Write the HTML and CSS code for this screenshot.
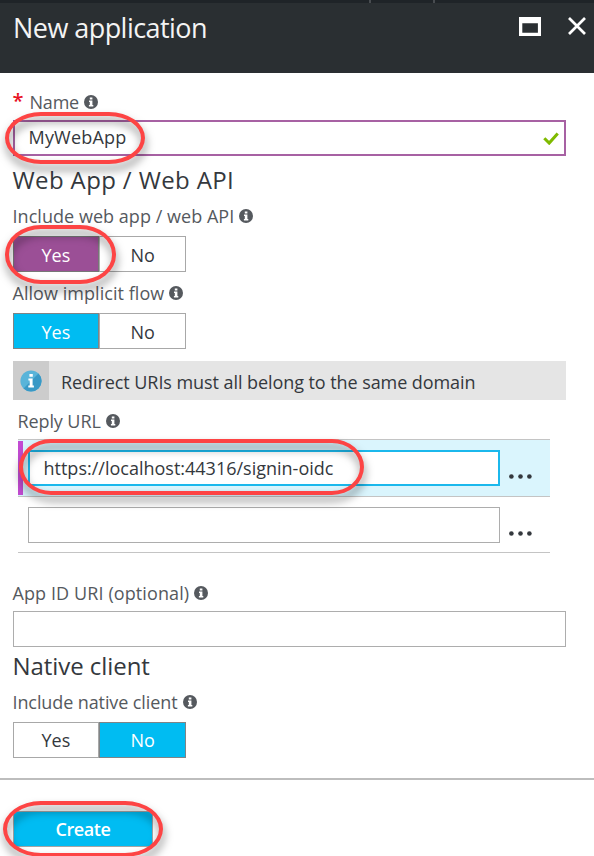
FILE: index.html
```html
<!DOCTYPE html>
<html lang="en">
<head>
<meta charset="utf-8">
<title>New application</title>
<link rel="stylesheet" href="styles.css">
</head>
<body>
<svg width="0" height="0" class="defs">
  <symbol id="info" viewBox="0 0 14 14">
    <circle cx="7" cy="7" r="7" fill="#55595e"/>
    <path d="M5.8 2.5h2.6v2.1H5.8zM5 5.6h3.4v4.4h.9v1.4H4.9V10h.9V7H5z" fill="#fff"/>
  </symbol>
</svg>
<main class="blade">
  <div class="topbar"><i></i><i></i></div>
  <header class="blade-header">
    <h1 class="title">New application</h1>
    <div class="window-actions">
      <svg class="icon-max" viewBox="0 0 22 19"><path fill-rule="evenodd" fill="#fff" d="M0 0h22v19H0zM3.3 6.3v9.4h15.6V6.3z"/></svg>
      <svg class="icon-close" viewBox="0 0 18 18"><path d="M1 1l16 16M17 1L1 17" stroke="#fff" stroke-width="2.7" fill="none"/></svg>
    </div>
  </header>

  <form class="form">
    <div class="label name-label"><b class="required">*</b><span>Name</span><svg class="info"><use href="#info"/></svg></div>
    <div class="field field-active"><span class="app-name">MyWebApp</span>
      <svg class="check" viewBox="0 0 16 13"><path d="M1.3 6.2l4.9 4.9L14.7 1.4" fill="none" stroke="#7fba00" stroke-width="3"/></svg>
    </div>

    <h2 class="section section-web">Web App / Web API</h2>
    <div class="label web-label"><span>Include web app / web API</span><svg class="info"><use href="#info"/></svg></div>
    <div class="toggle"><span class="option purple">Yes</span><span class="option">No</span></div>
    <div class="label flow-label"><span>Allow implicit flow</span><svg class="info"><use href="#info"/></svg></div>
    <div class="toggle"><span class="option blue">Yes</span><span class="option">No</span></div>

    <div class="banner">
      <div class="banner-icon">
        <svg viewBox="0 0 22 22"><circle cx="11" cy="11" r="10.6" fill="#59b4d9"/><path d="M18.5 3.5A10.6 10.6 0 0 1 3.5 18.5z" fill="#3999c6"/><path d="M9.4 4h3.4v2.8H9.4zM8.4 8.6h4.2v7h1.3v1.8H8.3v-1.8h1.4v-5.1H8.4z" fill="#fff"/></svg>
      </div>
      <span class="banner-text">Redirect URIs must all belong to the same domain</span>
    </div>

    <div class="reply">
      <div class="label reply-label"><span>Reply URL</span><svg class="info"><use href="#info"/></svg></div>
      <div class="row row-selected">
        <div class="field field-focus"><span>https://localhost:44316/signin-oidc</span></div>
        <svg class="dots" viewBox="0 0 23 5"><circle cx="2.4" cy="2.5" r="2.3"/><circle cx="11.5" cy="2.5" r="2.3"/><circle cx="20.4" cy="2.5" r="2.3"/></svg>
      </div>
      <div class="row">
        <div class="field"></div>
        <svg class="dots" viewBox="0 0 23 5"><circle cx="2.4" cy="2.5" r="2.3"/><circle cx="11.5" cy="2.5" r="2.3"/><circle cx="20.4" cy="2.5" r="2.3"/></svg>
      </div>
    </div>

    <div class="label uri-label"><span>App ID URI (optional)</span><svg class="info"><use href="#info"/></svg></div>
    <div class="field field-wide"></div>

    <h2 class="section section-native">Native client</h2>
    <div class="label native-label"><span>Include native client</span><svg class="info"><use href="#info"/></svg></div>
    <div class="toggle toggle-native"><span class="option">Yes</span><span class="option blue">No</span></div>
  </form>

  <footer class="footer">
    <div class="create">Create</div>
  </footer>

  <div class="ring ring-name"></div>
  <div class="ring ring-yes"></div>
  <div class="ring ring-url"></div>
  <div class="ring ring-create"></div>
</main>
</body>
</html>
```
FILE: styles.css
```css
* { box-sizing: border-box; }
body { margin: 0; background: #fff; font: 18px/24px "Open Sans", "Noto Sans", sans-serif; color: #34383d; }
.defs { position: absolute; }
.blade { position: relative; width: 594px; height: 856px; overflow: hidden; }
.topbar { height: 3px; background: #1f2428; display: flex; padding-left: 369px; gap: 62px; }
.topbar i { width: 2px; height: 3px; background: #484c50; }
.blade-header { height: 70px; background: #2a2f32; display: flex; justify-content: space-between; padding: 0 8px 0 13px; }
.title { margin: 4px 0 0; font-size: 27px; line-height: 42px; font-weight: 400; letter-spacing: -.55px; color: #f4f4f4; white-space: nowrap; }
.window-actions { display: flex; gap: 27px; padding-top: 14px; }
.icon-max { width: 22px; height: 19px; }
.icon-close { width: 18px; height: 18px; }
.form { padding: 0 28px 0 12.5px; height: 705px; display: flex; flex-direction: column; }
.label { display: flex; align-items: center; height: 24px; color: #55595e; white-space: nowrap; flex: none; }
.info { width: 14px; height: 14px; margin-left: 5px; }
.required { color: #e81123; width: 17px; font-size: 20px; font-weight: 600; padding-bottom: 3px; }
.name-label { margin-top: 17px; letter-spacing: -.2px; }
.field { height: 36px; border: 1.5px solid #adadad; background: #fff; display: flex; align-items: center; justify-content: space-between; padding: 0 5px 0 15px; white-space: nowrap; flex: none; }
.field-active { margin-top: 6px; border: 2px solid #a761a3; padding-left: 14px; }
.app-name { letter-spacing: .2px; margin-top: -2px; }
.check { width: 16px; height: 13px; }
.section { margin: 0; font-size: 24px; line-height: 32px; font-weight: 400; white-space: nowrap; height: 32px; flex: none; }
.section-web { margin-top: 8px; letter-spacing: .38px; }
.web-label { margin-top: 8px; letter-spacing: .04px; }
.toggle { display: flex; width: 173.5px; height: 36px; margin-top: 8px; flex: none; }
.option { flex: 1; border: 1.5px solid #a8a8a8; display: flex; align-items: center; justify-content: center; padding-top: 2px; }
.purple { background: #9b4f96; border-color: #777; color: #fff; }
.blue { background: #00bcf2; border-color: #7f8486; color: #fff; }
.toggle-native .option { padding-top: 0; }
.flow-label { margin-top: 9px; letter-spacing: .05px; }
.banner { display: flex; align-items: center; height: 39px; background: #e5e5e5; margin-top: 12px; flex: none; }
.banner-icon { width: 36px; height: 39px; background: #ccc; margin-right: 12.5px; display: flex; align-items: center; justify-content: center; }
.banner-icon svg { width: 22px; height: 22px; }
.banner-text { letter-spacing: -.07px; padding-top: 2px; }
.reply { padding: 0 16px 0 5px; margin-top: 9px; flex: none; }
.reply-label { letter-spacing: -.1px; }
.row { display: flex; align-items: center; height: 56px; border-bottom: 1.5px solid #c4c4c4; padding-left: 10px; }
.row .field { width: 472px; }
.row-selected { height: 58px; margin-top: 6px; background: #daf5fd; border-top: 1.5px solid #c4c4c4; padding-left: 0; }
.row-selected::before { content: ""; width: 5px; height: 54px; background: #c24bd2; margin-right: 5px; }
.row .field-focus { border: 2px solid #1bb8ec; padding-left: 14px; }
.dots { width: 23px; height: 5px; margin: 17px 0 0 9px; fill: #34383d; }
.uri-label { margin-top: 28px; letter-spacing: .1px; }
.field-wide { margin-top: 6px; }
.section-native { margin-top: 3px; letter-spacing: -.06px; }
.native-label { margin-top: 8px; letter-spacing: -.1px; }
.footer { border-top: 2px solid #bdbdbd; padding: 31px 0 0 13px; height: 78px; }
.create { width: 140px; height: 36px; background: #00bcf2; border: 1.5px solid #a5a5a5; display: flex; align-items: center; justify-content: center; color: #fff; font-weight: 600; letter-spacing: -.4px; }
.ring { position: absolute; border: 4.5px solid #fd4444; filter: drop-shadow(1px 6px 4px rgba(0,0,0,.5)); }
.ring-name { left: 5px; top: 112px; width: 140px; height: 52px; border-radius: 36px / 26px; }
.ring-yes { left: 5px; top: 225px; width: 111px; height: 59px; border-radius: 36px / 29px; }
.ring-url { left: 19px; top: 439px; width: 345px; height: 56px; border-radius: 32px / 28px; }
.ring-create { left: 3px; top: 801px; width: 160px; height: 56px; border-radius: 38px / 28px; }
```
